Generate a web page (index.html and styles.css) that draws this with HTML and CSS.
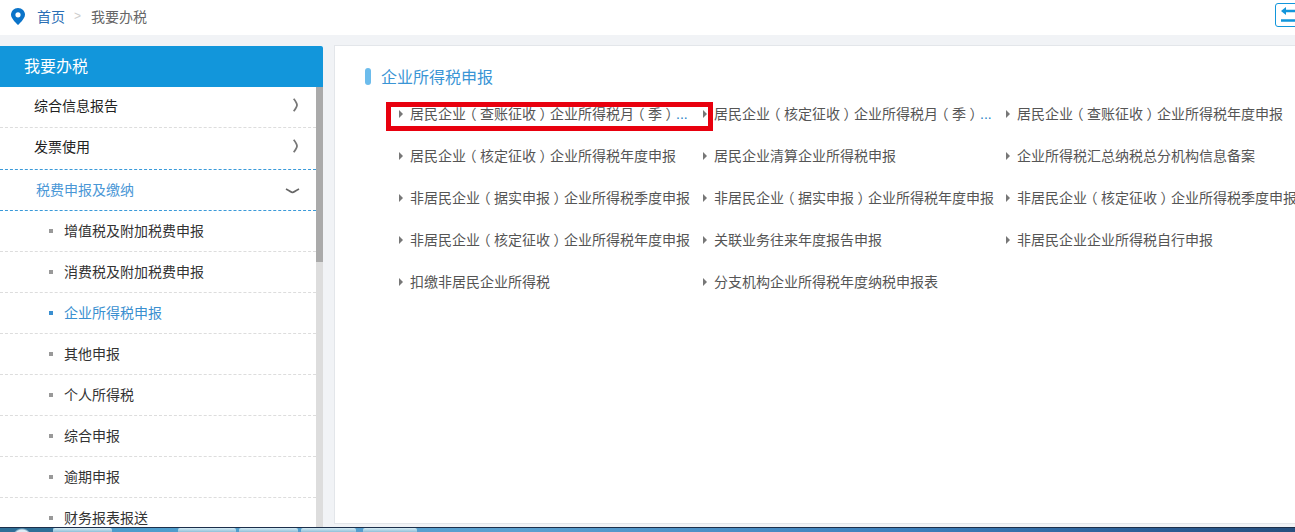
FILE: index.html
```html
<!DOCTYPE html>
<html lang="zh-CN">
<head>
    <meta charset="UTF-8">
    <title>我要办税</title>
    <link rel="stylesheet" href="styles.css">
</head>
<body>
    <div class="topBar">
        <svg class="pinIcon" width="14" height="17" viewBox="0 0 14 17">
            <path d="M7 0C3 0 0 3 0 6.800 0 11 7 17 7 17s7-6 7-10.200C14 3 11 0 7 0z" fill="#0b74c9"/>
            <circle cx="7" cy="6.800" r="2.600" fill="#fff"/>
        </svg>
        <a class="crumbLink">首页</a>
        <span class="crumbSep">&gt;</span>
        <span class="crumbNow">我要办税</span>
        <div class="backBtn">
            <svg width="20" height="16" viewBox="0 0 20 16">
                <path d="M3 4H20M0 13.500H20" stroke="#1296db" stroke-width="2.500"/>
                <path d="M0 4L5 0V8z" fill="#1296db"/>
            </svg>
        </div>
    </div>

    <div class="pageBody">
        <div class="sideMenu">
            <div class="sideTitle">我要办税</div>
            <div class="sideScroll">
                <div class="sideList">
                    <div class="menuRow firstRow">综合信息报告
                        <svg class="arrowRight" width="5" height="14" viewBox="0 0 5 14"><path d="M.7.700Q4 5 4 7T.7 13.300" fill="none" stroke="#777" stroke-width="1.800"/></svg>
                    </div>
                    <div class="menuRow beforeOpen">发票使用
                        <svg class="arrowRight" width="5" height="14" viewBox="0 0 5 14"><path d="M.7.700Q4 5 4 7T.7 13.300" fill="none" stroke="#777" stroke-width="1.800"/></svg>
                    </div>
                    <div class="menuRow openRow">税费申报及缴纳
                        <svg class="arrowDown" width="15" height="6" viewBox="0 0 15 6"><path d="M1 1Q6 4 7.500 4.500 9 4 14 1" fill="none" stroke="#666" stroke-width="1.500"/></svg>
                    </div>
                    <div class="subRow">增值税及附加税费申报</div>
                    <div class="subRow">消费税及附加税费申报</div>
                    <div class="subRow current">企业所得税申报</div>
                    <div class="subRow">其他申报</div>
                    <div class="subRow">个人所得税</div>
                    <div class="subRow">综合申报</div>
                    <div class="subRow">逾期申报</div>
                    <div class="subRow">财务报表报送</div>
                </div>
                <div class="scrollTrack"><div class="scrollThumb"></div></div>
            </div>
        </div>

        <div class="mainPanel">
            <div class="panelTitle">企业所得税申报</div>
            <div class="itemGrid">
                <div class="item marked">居民企业<span class="br">（</span>查账征收<span class="br">）</span>企业所得税月<span class="br">（</span>季<span class="br">）</span><span class="more">...</span></div>
                <div class="item">居民企业<span class="br">（</span>核定征收<span class="br">）</span>企业所得税月<span class="br">（</span>季<span class="br">）</span><span class="more">...</span></div>
                <div class="item">居民企业<span class="br">（</span>查账征收<span class="br">）</span>企业所得税年度申报</div>
                <div class="item">居民企业<span class="br">（</span>核定征收<span class="br">）</span>企业所得税年度申报</div>
                <div class="item">居民企业清算企业所得税申报</div>
                <div class="item">企业所得税汇总纳税总分机构信息备案</div>
                <div class="item">非居民企业<span class="br">（</span>据实申报<span class="br">）</span>企业所得税季度申报</div>
                <div class="item">非居民企业<span class="br">（</span>据实申报<span class="br">）</span>企业所得税年度申报</div>
                <div class="item">非居民企业<span class="br">（</span>核定征收<span class="br">）</span>企业所得税季度申报</div>
                <div class="item">非居民企业<span class="br">（</span>核定征收<span class="br">）</span>企业所得税年度申报</div>
                <div class="item">关联业务往来年度报告申报</div>
                <div class="item">非居民企业企业所得税自行申报</div>
                <div class="item">扣缴非居民企业所得税</div>
                <div class="item">分支机构企业所得税年度纳税申报表</div>
            </div>
        </div>
    </div>

    <div class="taskBar">
        <div class="taskStart"></div>
        <div class="taskBtn btnA"></div>
        <div class="taskBtn btnB"></div>
        <div class="taskBtn btnC"></div>
        <div class="taskBtn btnD"></div>
        <div class="taskBtn btnE"></div>
    </div>
</body>
</html>
```

FILE: styles.css
```css
html, body {
    margin: 0;
    height: 100%;
}

body {
    width: 1295px;
    height: 532px;
    overflow: hidden;
    display: flex;
    flex-direction: column;
    background-color: #f1f3f6;
    font-family: "Liberation Sans", "Noto Sans CJK SC", sans-serif;
    font-size: 14px;
    color: #555;
}

.topBar {
    height: 35px;
    box-sizing: border-box;
    flex-shrink: 0;
    padding: 0 0 3px 11px;
    background-color: white;
    display: flex;
    align-items: center;
}

.pinIcon {
    margin-right: 12px;
}

.crumbLink {
    color: #2b6fb5;
}

.crumbSep {
    margin: 0 10px 0 9px;
    color: #ccc;
    font-size: 12px;
}

.crumbNow {
    color: #666;
}

.backBtn {
    margin-left: auto;
    margin-right: -18px;
    width: 38px;
    height: 24px;
    border: 1px solid #1296db;
    border-radius: 3px;
    padding: 3px 0 0 5px;
    box-sizing: border-box;
    margin-bottom: 2px;
}

.backBtn svg {
    display: block;
}

.pageBody {
    flex-grow: 1;
    min-height: 0;
    display: flex;
    padding-top: 10px;
}

.sideMenu {
    width: 323px;
    flex-shrink: 0;
    display: flex;
    flex-direction: column;
    background-color: white;
    margin-top: 1px;
}

.sideTitle {
    height: 41px;
    line-height: 41px;
    flex-shrink: 0;
    padding-left: 24px;
    background-color: #1296db;
    color: white;
    font-size: 16px;
    border-radius: 0 2px 0 0;
}

.sideScroll {
    flex-grow: 1;
    min-height: 0;
    display: flex;
    overflow: hidden;
}

.sideList {
    flex-grow: 1;
    min-width: 0;
}

.scrollTrack {
    width: 7px;
    flex-shrink: 0;
    background-color: #ddd;
}

.scrollThumb {
    height: 175px;
    background-color: #aaa;
}

.menuRow {
    height: 40px;
    padding-left: 34px;
    color: #222;
    border-bottom: 1px dashed #ddd;
    display: flex;
    justify-content: space-between;
    align-items: center;
}

.menuRow.firstRow {
    height: 36px;
    padding-bottom: 4px;
}

.menuRow.beforeOpen {
    height: 36px;
    padding-bottom: 5px;
    border-bottom: 1px dashed #3a9ad9;
}

.menuRow.openRow {
    height: 38px;
    padding-bottom: 2px;
    padding-left: 36px;
    color: #4a97d6;
    border-bottom: 1px dashed #3a9ad9;
}

.arrowRight {
    margin-right: 18px;
}

.arrowDown {
    margin-right: 16px;
    margin-top: 3px;
}

.subRow {
    height: 40px;
    line-height: 40px;
    padding-left: 64px;
    color: #333;
    border-bottom: 1px dashed #ddd;
    position: relative;
}

.subRow::before {
    content: "";
    position: absolute;
    left: 49px;
    top: 18px;
    width: 4px;
    height: 4px;
    background-color: #999;
}

.subRow.current {
    color: #3a8fd0;
}

.subRow.current::before {
    background-color: #3a8fd0;
}

.mainPanel {
    flex-grow: 1;
    min-width: 0;
    margin-left: 11px;
    margin-bottom: 3px;
    padding: 21px 0 0 30px;
    background-color: white;
    border: 1px solid #e3e6ea;
    border-right: none;
    box-sizing: border-box;
    overflow: hidden;
}

.panelTitle {
    height: 22px;
    line-height: 22px;
    padding-left: 16px;
    color: #3a95d5;
    font-size: 16px;
    position: relative;
}

.panelTitle::before {
    content: "";
    position: absolute;
    left: 0;
    top: 1px;
    width: 6px;
    height: 17px;
    border-radius: 3px;
    background-color: #6cbcec;
}

.itemGrid {
    display: grid;
    grid-template-columns: 304px 303px 320px;
    grid-auto-rows: 42px;
    margin-top: 4px;
    margin-left: 33px;
}

.item {
    line-height: 42px;
    padding-left: 12px;
    position: relative;
    white-space: nowrap;
    color: #555;
}

.item::before {
    content: "";
    position: absolute;
    left: 1px;
    top: 17px;
    border-left: 4px solid #777;
    border-top: 4px solid transparent;
    border-bottom: 4px solid transparent;
}

/* full-width brackets sit in the middle of their cell in the original font */
.br {
    font-feature-settings: "halt";
    margin: 0 3.5px;
}

.more {
    color: #2a7fc6;
}

.marked::after {
    content: "";
    position: absolute;
    left: -12px;
    top: 9px;
    width: 327px;
    height: 29px;
    box-sizing: border-box;
    border: 5px solid #e8000e;
}

.taskBar {
    height: 4px;
    flex-shrink: 0;
    display: flex;
    border-top: 1px solid #1c2f4a;
    background: linear-gradient(90deg, #4a9ccb 0%, #5aa0d0 40%, #3c7fbc 70%, #2a5c94 90%, #264f7e 100%);
}

.taskStart {
    width: 53px;
    background: radial-gradient(circle at 22px 10px, #dcecf5 0, #dcecf5 8px, #2f6f97 10px);
}

.taskBtn {
    background: linear-gradient(#d8ecf5, #8fc0d8);
    border-radius: 2px 2px 0 0;
}

.btnA { width: 59px; }
.btnB { width: 58px; margin-left: 66px; }
.btnC { width: 59px; margin-left: 3px; }
.btnD { width: 55px; margin-left: 3px; }
.btnE { width: 54px; margin-left: 7px; }
```
